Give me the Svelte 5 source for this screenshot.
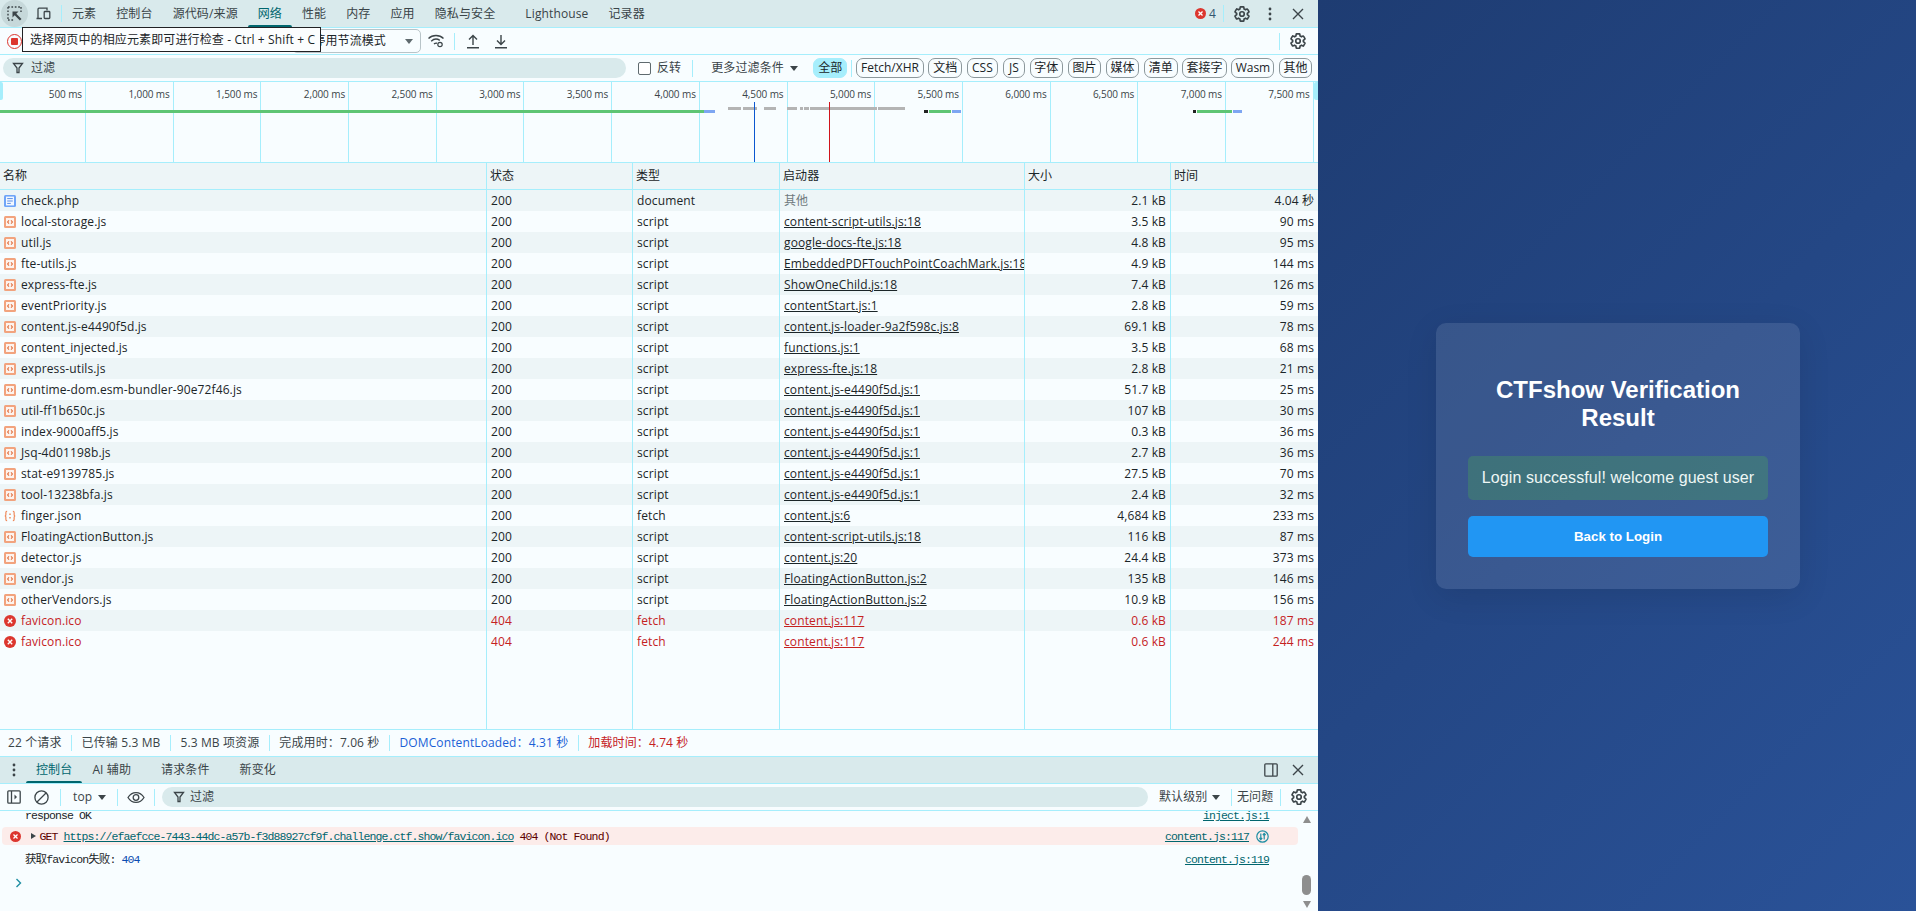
<script>
const tabs = [
  { t: '元素' }, { t: '控制台' }, { t: '源代码/来源' }, { t: '网络', active: true }, { t: '性能' },
  { t: '内存' }, { t: '应用' }, { t: '隐私与安全' }, { t: 'Lighthouse', gap: true }, { t: '记录器' }
];
const chips = [
  { t: 'Fetch/XHR', w: 67.5 }, { t: '文档', w: 33.5 }, { t: 'CSS', w: 31.5 }, { t: 'JS', w: 22 },
  { t: '字体', w: 33.5 }, { t: '图片', w: 33.5 }, { t: '媒体', w: 33.5 }, { t: '清单', w: 33.5 },
  { t: '套接字', w: 44.5 }, { t: 'Wasm', w: 43 }, { t: '其他', w: 33 }
];
const ticks = ['500 ms', '1,000 ms', '1,500 ms', '2,000 ms', '2,500 ms', '3,000 ms', '3,500 ms', '4,000 ms', '4,500 ms', '5,000 ms', '5,500 ms', '6,000 ms', '6,500 ms', '7,000 ms', '7,500 ms'];
const G = '#5fc574', B = '#7ea6f2', Y = '#b4b4b4', K = '#222222';
const bars = [
  { x: 0, w: 704, y: 28, c: G, h: 3 }, { x: 704, w: 11, y: 28, c: B, h: 3 },
  { x: 728, w: 13, y: 25, c: Y, h: 3 }, { x: 743, w: 14, y: 25, c: Y, h: 3 },
  { x: 764, w: 12, y: 25, c: Y, h: 3 }, { x: 787, w: 10, y: 25, c: Y, h: 3 },
  { x: 800, w: 3, y: 25, c: Y, h: 3 }, { x: 804, w: 5, y: 25, c: Y, h: 3 }, { x: 810, w: 67, y: 25, c: Y, h: 3 },
  { x: 878, w: 27, y: 25, c: Y, h: 3 },
  { x: 924, w: 4, y: 28, c: K, h: 3 }, { x: 929, w: 22, y: 28, c: G, h: 3 }, { x: 952, w: 9, y: 28, c: B, h: 3 },
  { x: 1193, w: 3, y: 28, c: K, h: 3 }, { x: 1197, w: 35, y: 28, c: G, h: 3 }, { x: 1233, w: 9, y: 28, c: B, h: 3 }
];
const rows = [
  ['doc', 'check.php', '200', 'document', '其他', '2.1 kB', '4.04 秒'],
  ['js', 'local-storage.js', '200', 'script', 'content-script-utils.js:18', '3.5 kB', '90 ms'],
  ['js', 'util.js', '200', 'script', 'google-docs-fte.js:18', '4.8 kB', '95 ms'],
  ['js', 'fte-utils.js', '200', 'script', 'EmbeddedPDFTouchPointCoachMark.js:18', '4.9 kB', '144 ms'],
  ['js', 'express-fte.js', '200', 'script', 'ShowOneChild.js:18', '7.4 kB', '126 ms'],
  ['js', 'eventPriority.js', '200', 'script', 'contentStart.js:1', '2.8 kB', '59 ms'],
  ['js', 'content.js-e4490f5d.js', '200', 'script', 'content.js-loader-9a2f598c.js:8', '69.1 kB', '78 ms'],
  ['js', 'content_injected.js', '200', 'script', 'functions.js:1', '3.5 kB', '68 ms'],
  ['js', 'express-utils.js', '200', 'script', 'express-fte.js:18', '2.8 kB', '21 ms'],
  ['js', 'runtime-dom.esm-bundler-90e72f46.js', '200', 'script', 'content.js-e4490f5d.js:1', '51.7 kB', '25 ms'],
  ['js', 'util-ff1b650c.js', '200', 'script', 'content.js-e4490f5d.js:1', '107 kB', '30 ms'],
  ['js', 'index-9000aff5.js', '200', 'script', 'content.js-e4490f5d.js:1', '0.3 kB', '36 ms'],
  ['js', 'Jsq-4d01198b.js', '200', 'script', 'content.js-e4490f5d.js:1', '2.7 kB', '36 ms'],
  ['js', 'stat-e9139785.js', '200', 'script', 'content.js-e4490f5d.js:1', '27.5 kB', '70 ms'],
  ['js', 'tool-13238bfa.js', '200', 'script', 'content.js-e4490f5d.js:1', '2.4 kB', '32 ms'],
  ['json', 'finger.json', '200', 'fetch', 'content.js:6', '4,684 kB', '233 ms'],
  ['js', 'FloatingActionButton.js', '200', 'script', 'content-script-utils.js:18', '116 kB', '87 ms'],
  ['js', 'detector.js', '200', 'script', 'content.js:20', '24.4 kB', '373 ms'],
  ['js', 'vendor.js', '200', 'script', 'FloatingActionButton.js:2', '135 kB', '146 ms'],
  ['js', 'otherVendors.js', '200', 'script', 'FloatingActionButton.js:2', '10.9 kB', '156 ms'],
  ['err', 'favicon.ico', '404', 'fetch', 'content.js:117', '0.6 kB', '187 ms'],
  ['err', 'favicon.ico', '404', 'fetch', 'content.js:117', '0.6 kB', '244 ms']
];
const GEAR = 'M19.14 12.94c.04-.3.06-.61.06-.94 0-.32-.02-.64-.07-.94l2.03-1.58c.18-.14.23-.41.12-.61l-1.92-3.32c-.12-.22-.37-.29-.59-.22l-2.39.96c-.5-.38-1.03-.7-1.62-.94l-.36-2.54c-.04-.24-.24-.41-.48-.41h-3.84c-.24 0-.43.17-.47.41l-.36 2.54c-.59.24-1.13.57-1.62.94l-2.39-.96c-.22-.08-.47 0-.59.22L2.74 8.87c-.12.21-.08.47.12.61l2.03 1.58c-.05.3-.09.63-.09.94s.02.64.07.94l-2.03 1.58c-.18.14-.23.41-.12.61l1.92 3.32c.12.22.37.29.59.22l2.39-.96c.5.38 1.03.7 1.62.94l.36 2.54c.05.24.24.41.48.41h3.84c.24 0 .44-.17.47-.41l.36-2.54c.59-.24 1.13-.56 1.62-.94l2.39.96c.22.08.47 0 .59-.22l1.92-3.32c.12-.22.07-.47-.12-.61l-2.01-1.58z';
</script>

{#snippet gear()}
  <svg class="ico" width="18" height="18" viewBox="0 0 24 24" fill="none" stroke="#3c4549" stroke-width="2.2"><path d={GEAR} /><circle cx="12" cy="12" r="3" /></svg>
{/snippet}
{#snippet close()}
  <svg class="ico" width="14" height="14" viewBox="0 0 14 14" fill="none" stroke="#3c4549" stroke-width="1.4"><path d="M2 2l10 10M12 2L2 12" /></svg>
{/snippet}
{#snippet kebab()}
  <svg class="ico" width="4" height="14" viewBox="0 0 4 14" fill="#3c4549"><circle cx="2" cy="2" r="1.4" /><circle cx="2" cy="7" r="1.4" /><circle cx="2" cy="12" r="1.4" /></svg>
{/snippet}
{#snippet funnel()}
  <svg class="ico" width="12" height="12" viewBox="0 0 12 12" fill="none" stroke="#3c4549" stroke-width="1.3"><path d="M1.5 1.5h9L7 6v4.5H5V6z" /></svg>
{/snippet}
{#snippet errdot(size)}
  <svg class="ico" width={size} height={size} viewBox="0 0 12 12"><circle cx="6" cy="6" r="6" fill="#dc362e" /><path d="M3.8 3.8l4.4 4.4M8.2 3.8l-4.4 4.4" stroke="#fff" stroke-width="1.4" /></svg>
{/snippet}
{#snippet rowIcon(kind)}
  {#if kind === 'doc'}
    <svg class="ico" width="12" height="12" viewBox="0 0 12 12"><rect width="12" height="12" rx="1.5" fill="#6fa5f8" /><rect x="2" y="1.6" width="8" height="8.8" fill="#f3f8ff" /><path d="M3.2 3.6h5.6M3.2 6h5.6M3.2 8.4h3.6" stroke="#5b8fe6" stroke-width="1" /></svg>
  {:else if kind === 'js'}
    <svg class="ico" width="12" height="12" viewBox="0 0 12 12"><rect width="12" height="12" rx="1.5" fill="#f2a37e" /><rect x="2" y="2" width="8" height="8" fill="#fdf3ee" /><path d="M5 4.4L3.6 6 5 7.6M7 4.4L8.4 6 7 7.6" fill="none" stroke="#e0703f" stroke-width="1.1" /></svg>
  {:else if kind === 'json'}
    <svg class="ico" width="12" height="12" viewBox="0 0 13 12" fill="none" stroke="#ee8a5c" stroke-width="1.3"><path d="M3.4 1H3Q2 1 2 2.4V4.6Q2 6 .8 6 2 6 2 7.4V9.6Q2 11 3 11h.4M9.6 1h.4q1 0 1 1.4v2.2Q11 6 12.2 6 11 6 11 7.4v2.2Q11 11 10 11h-.4" /><path d="M6.5 3.4v1.4M6.5 7v1.6" stroke-width="1.6" /></svg>
  {:else}
    {@render errdot(12)}
  {/if}
{/snippet}

<div class="page">
  <div class="devtools">
    <div class="bar tabs">
      <span class="inspect">
        <svg class="ico" width="16" height="16" viewBox="0 0 16 16" fill="none" stroke="#3c4549" stroke-width="1.4"><path d="M1 1h13M1 1v13M1 14h6M14 1v5" stroke-dasharray="1.7 1.7" /><path d="M5.5 5.5h6l-2.2 2.2 5.2 5.2-1.6 1.6-5.2-5.200-2.200 2.200z" fill="#3c4549" stroke="none" /></svg>
      </span>
      <span class="device">
        <svg class="ico" width="16" height="14" viewBox="0 0 16 14" fill="none" stroke="#3c4549" stroke-width="1.3"><path d="M7 11.5H1.5M3 11.5V2.2A1 1 0 0 1 4 1.2h8v2.2" /><rect x="9.2" y="4.5" width="5.6" height="7" rx=".8" /></svg>
      </span>
      <i class="sep tabsep"></i>
      {#each tabs as tab}
        <span class="tab" class:active={tab.active} class:wide={tab.gap}>{tab.t}</span>
      {/each}
      <span class="grow"></span>
      <span class="errcount">{@render errdot(11)}<b>4</b></span>
      <i class="sep"></i>
      <span class="iconbtn gearbtn">{@render gear()}</span>
      <span class="iconbtn kebabbtn">{@render kebab()}</span>
      <span class="iconbtn closebtn">{@render close()}</span>
    </div>

    <div class="bar toolbar">
      <span class="record"><i></i></span>
      <span class="grow-spacer"></span>
      <span class="select">停用节流模式<i class="caret"></i></span>
      <svg class="ico wifi" width="18" height="16" viewBox="0 0 18 16" fill="none" stroke="#3c4549" stroke-width="1.4"><path d="M1.5 5.5C5.5 1.5 12.5 1.5 16.5 5.5M4.2 8.2c2.5-2.3 6-2.6 8.6-.8M7 11c.9-.8 2-1 3-.8" /><circle cx="13" cy="11.5" r="2.2" stroke-width="1.2" /></svg>
      <i class="sep s2"></i>
      <svg class="ico up" width="14" height="15" viewBox="0 0 14 15" fill="none" stroke="#3c4549" stroke-width="1.4"><path d="M7 11V2M3 5.6L7 1.6l4 4M1 13.8h12" /></svg>
      <svg class="ico down" width="14" height="15" viewBox="0 0 14 15" fill="none" stroke="#3c4549" stroke-width="1.4"><path d="M7 1v9M3 6.4l4 4 4-4M1 13.8h12" /></svg>
      <span class="grow"></span>
      <i class="sep"></i>
      <span class="iconbtn gearbtn2">{@render gear()}</span>
    </div>

    <div class="bar filter">
      <div class="pill netpill"><span class="fun">{@render funnel()}</span><span>过滤</span></div>
      <span class="check"></span>
      <span class="inv">反转</span>
      <i class="sep s3"></i>
      <span class="more">更多过滤条件<i class="caret dark"></i></span>
      <span class="chip on">全部</span>
      <i class="sep s4"></i>
      {#each chips as c}<span class="chip" style="width:{c.w}px">{c.t}</span>{/each}
    </div>

    <div class="timeline">
      <div class="ticks">
        {#each ticks as t}<div class="tick">{t}</div>{/each}
      </div>
      <i class="handle left"></i>
      <i class="handle right"></i>
      {#each bars as b}
        <i class="wbar" style="left:{b.x}px;top:{b.y}px;width:{b.w}px;height:{b.h}px;background:{b.c}"></i>
      {/each}
      <i class="vline blue"></i>
      <i class="vline red"></i>
    </div>

    <div class="table">
      <div class="grid head">
        <div>名称</div><div>状态</div><div>类型</div><div>启动器</div><div>大小</div><div>时间</div>
      </div>
      {#each rows as r, i}
        <div class="grid row" class:alt={i % 2 === 0} class:bad={r[0] === 'err'}>
          <div class="namecell">{@render rowIcon(r[0])}<span>{r[1]}</span></div>
          <div>{r[2]}</div>
          <div>{r[3]}</div>
          <div class:other={r[4] === '其他'}><span class:lnk={r[4] !== '其他'}>{r[4]}</span></div>
          <div class="num">{r[5]}</div>
          <div class="num">{r[6]}</div>
        </div>
      {/each}
      <div class="grid filler"><div></div><div></div><div></div><div></div><div></div><div></div></div>
    </div>

    <div class="status">
      <span class="first">22 个请求</span>
      <span>已传输 5.3 MB</span>
      <span>5.3 MB 项资源</span>
      <span>完成用时：7.06 秒</span>
      <span class="dcl">DOMContentLoaded：4.31 秒</span>
      <span class="load">加载时间：4.74 秒</span>
    </div>

    <div class="bar drawer">
      <span class="iconbtn dkebab">{@render kebab()}</span>
      <span class="tab active">控制台</span>
      <span class="tab">AI 辅助</span>
      <span class="tab pad">请求条件</span>
      <span class="tab pad">新变化</span>
      <span class="grow"></span>
      <svg class="ico dock" width="14" height="14" viewBox="0 0 14 14" fill="none" stroke="#3c4549" stroke-width="1.3"><rect x=".8" y=".8" width="12.4" height="12.4" rx="1" /><path d="M8.8 1v12" /></svg>
      <span class="iconbtn closebtn">{@render close()}</span>
    </div>

    <div class="bar ctool">
      <svg class="ico sb" width="14" height="14" viewBox="0 0 14 14" fill="none" stroke="#3c4549" stroke-width="1.3"><rect x=".8" y=".8" width="12.4" height="12.4" rx="1" /><path d="M4.5 1v12" /><path d="M7.5 4.6L10 7 7.5 9.4z" fill="#3c4549" stroke="none" /></svg>
      <svg class="ico clear" width="15" height="15" viewBox="0 0 15 15" fill="none" stroke="#3c4549" stroke-width="1.3"><circle cx="7.5" cy="7.5" r="6.6" /><path d="M3 12L12 3" /></svg>
      <i class="sep s5"></i>
      <span class="topsel">top<i class="caret dark"></i></span>
      <i class="sep s6"></i>
      <svg class="ico eye" width="18" height="13" viewBox="0 0 18 13" fill="none" stroke="#3c4549" stroke-width="1.3"><path d="M1 6.5c4-6.6 12-6.6 16 0-4 6.6-12 6.6-16 0z" /><circle cx="9" cy="6.5" r="2.8" /></svg>
      <i class="sep s7"></i>
      <div class="pill conpill"><span class="fun2">{@render funnel()}</span><span>过滤</span></div>
      <span class="level">默认级别<i class="caret dark"></i></span>
      <i class="sep s8"></i>
      <span class="noissue">无问题</span>
      <i class="sep"></i>
      <span class="iconbtn gearbtn3">{@render gear()}</span>
    </div>

    <div class="console">
      <div class="msgs">
        <div class="line first-line"><span class="body">response OK</span><span class="src">inject.js:1</span></div>
        <div class="line errline">
          <span class="erri">{@render errdot(11)}</span>
          <i class="tri"></i>
          <span class="etext">GET <span class="url">https://efaefcce-7443-44dc-a57b-f3d88927cf9f.challenge.ctf.show/favicon.ico</span> 404 (Not Found)</span>
          <span class="src">content.js:117</span>
          <svg class="ico net" width="13" height="13" viewBox="0 0 13 13" fill="none" stroke="#1f8ea3" stroke-width="1.2"><circle cx="6.5" cy="6.5" r="5.7" /><path d="M4.8 3.5v6M3.4 8l1.4 1.5L6.2 8M8.2 9.5v-6M6.8 5l1.4-1.5L9.6 5" /></svg>
        </div>
        <div class="line third"><span class="body">获取favicon失败: <span class="blue">404</span></span><span class="src">content.js:119</span></div>
        <div class="prompt">
          <svg class="ico" width="7" height="10" viewBox="0 0 7 10" fill="none" stroke="#1f8ea3" stroke-width="1.4"><path d="M1.5 1l4 4-4 4" /></svg>
        </div>
      </div>
      <div class="scroll">
        <i class="sarrow up2"></i>
        <span class="grow"></span>
        <i class="thumb"></i>
        <i class="sarrow down2"></i>
      </div>
    </div>

    <div class="tooltip">选择网页中的相应元素即可进行检查 - Ctrl + Shift + C</div>
  </div>

  <main class="result">
    <section class="card">
      <h2>CTFshow Verification Result</h2>
      <div class="message">Login successful! welcome guest user</div>
      <button class="back">Back to Login</button>
    </section>
  </main>
</div>

<style>
  :global(body) { margin: 0; overflow: hidden; }
  .page { display: flex; width: 1916px; height: 911px; }
  .devtools {
    position: relative; width: 1318px; flex: none; display: flex; flex-direction: column;
    background: #f8fdff; color: #1b2528; font: 12px/16px "Open Sans", "Noto Sans CJK SC", sans-serif;
    letter-spacing: 0.12px; white-space: nowrap; overflow: hidden;
  }
  i { display: block; font-style: normal; }
  .ico { display: block; flex: none; }
  .grow { flex: 1; }
  .sep { width: 1px; height: 17px; background: #a6eefc; flex: none; }
  .bar { display: flex; align-items: center; flex: none; border-bottom: 1px solid #a6eefc; box-sizing: border-box; }

  .tabs { height: 28px; background: #d9eaec; }
  .inspect { width: 27px; height: 27px; margin-left: 1px; border-radius: 50%; background: #c6d8da; display: flex; align-items: center; justify-content: center; flex: none; }
  .device { margin-left: 7px; flex: none; }
  .tabsep { margin-left: 10px; }
  .tab { padding: 0 10px; height: 100%; display: flex; align-items: center; white-space: nowrap; color: #3a4448; position: relative; box-sizing: border-box; }
  .tab.active { color: #00666e; }
  .tab.active::after { content: ""; position: absolute; left: 0; right: 0; bottom: 0; height: 2px; background: #00666e; border-radius: 2px 2px 0 0; }
  .tab.wide { margin-left: 10px; }
  .errcount { display: flex; align-items: center; gap: 3px; margin-right: 7px; }
  .errcount b { font-weight: 400; color: #34566e; }
  .iconbtn { display: flex; align-items: center; justify-content: center; flex: none; }
  .gearbtn { margin-left: 9px; }
  .kebabbtn { margin-left: 17px; }
  .closebtn { margin: 0 13px 0 19px; }

  .toolbar { height: 27px; }
  .record { width: 15px; height: 15px; margin-left: 7px; box-sizing: border-box; border: 1.5px solid #dc362e; border-radius: 50%; display: flex; align-items: center; justify-content: center; flex: none; }
  .record i { width: 7px; height: 7px; background: #dc362e; border-radius: 1px; }
  .grow-spacer { width: 270px; flex: none; }
  .select { width: 129px; height: 24px; box-sizing: border-box; border: 1px solid #b8c4c8; border-radius: 5px; display: flex; align-items: center; justify-content: flex-end; padding-right: 34px; position: relative; color: #1b2528; flex: none; }
  .caret { position: absolute; right: 7px; top: 9px; width: 0; height: 0; border-left: 4px solid transparent; border-right: 4px solid transparent; border-top: 5px solid #5f6a6e; }
  .caret.dark { border-top-color: #3c4549; }
  .wifi { margin-left: 6px; }
  .s2 { margin-left: 9px; }
  .up { margin-left: 11px; }
  .down { margin-left: 14px; }
  .gearbtn2 { margin: 0 11px 0 9px; }

  .filter { height: 27px; padding-left: 3px; }
  .pill { background: #d9eaec; border-radius: 10px; height: 20px; display: flex; align-items: center; box-sizing: border-box; color: #3a4448; flex: none; }
  .netpill { width: 623px; }
  .fun { margin: 0 7px 0 9px; }
  .check { width: 11px; height: 11px; border: 1px solid #5f6a6e; border-radius: 2px; margin-left: 12px; flex: none; background: #fff; }
  .inv { margin-left: 6px; color: #3a4448; }
  .s3 { margin-left: 11px; }
  .more { margin-left: 18px; width: 97px; position: relative; color: #3a4448; flex: none; }
  .more .caret { right: 10px; top: 6px; }
  .chip { height: 20px; box-sizing: border-box; border: 1px solid #8c989c; border-radius: 7px; display: flex; align-items: center; justify-content: center; margin-right: 4.7px; flex: none; color: #1b2528; letter-spacing: 0; }
  .chip.on { background: #a6eefc; border-color: #a6eefc; margin-right: 4px; margin-left: 5px; width: 34px; }
  .s4 { margin-right: 4px; }

  .timeline { position: relative; height: 81px; flex: none; border-bottom: 1px solid #a6eefc; box-sizing: border-box; }
  .ticks { display: flex; height: 100%; margin-left: -1.7px; }
  .tick { width: 87.7px; box-sizing: border-box; flex: none; border-right: 1px solid #a6eefc; text-align: right; padding: 4px 3px 0 0; white-space: nowrap; color: #3a4448; font-size: 10px; letter-spacing: -0.1px; }
  .handle { position: absolute; top: 0; width: 3px; height: 18px; background: #a6eefc; }
  .handle.left { left: 0; border-radius: 0 2px 2px 0; }
  .handle.right { right: 0; width: 4px; border-radius: 2px 0 0 2px; }
  .wbar { position: absolute; }
  .vline { position: absolute; top: 20px; bottom: 0; width: 1px; }
  .vline.blue { left: 754px; background: #0b57d0; }
  .vline.red { left: 829px; background: #d0141c; }

  .table { flex: 1; display: flex; flex-direction: column; min-height: 0; }
  .grid { display: grid; grid-template-columns: 487px 146px 147px 245px 146px 147px; flex: none; }
  .grid > div { border-right: 1px solid #a6eefc; padding: 0 4px; box-sizing: border-box; white-space: nowrap; overflow: hidden; display: flex; align-items: center; min-width: 0; }
  .grid > div:last-child { border-right: 0; }
  .head { height: 27px; background: #edf5f7; border-bottom: 1px solid #a6eefc; box-sizing: border-box; }
  .head > div { padding-left: 3px; }
  .row { height: 21px; }
  .row.alt { background: #edf5f7; }
  .row.bad { color: #c5221f; }
  .namecell { gap: 5px; }
  .num { justify-content: flex-end; }
  .other { color: #6f7a7e; }
  .lnk { text-decoration: underline; }
  .filler { flex: 1; }

  .status { height: 28px; flex: none; box-sizing: border-box; border-top: 1px solid #a6eefc; border-bottom: 1px solid #a6eefc; display: flex; align-items: center; padding-left: 8px; color: #3a4448; }
  .status span { padding: 0 9.5px; border-right: 1px solid #a6eefc; white-space: nowrap; line-height: 16px; }
  .status .first { padding-left: 0; }
  .status span:last-child { border-right: 0; }
  .status .dcl { color: #1a5fd6; }
  .status .load { color: #c5221f; }

  .drawer { height: 27px; background: #d9eaec; }
  .dkebab { width: 28px; }
  .drawer .tab.active { margin-left: -2px; padding: 0 10px; }
  .drawer .tab.pad { margin-left: 10px; }
  .drawer .closebtn { margin-left: 13px; }

  .ctool { height: 27px; }
  .sb { margin-left: 7px; }
  .clear { margin-left: 13px; }
  .s5 { margin-left: 11px; }
  .topsel { margin-left: 12px; width: 44px; position: relative; color: #3a4448; flex: none; }
  .topsel .caret { right: 11px; top: 6px; }
  .eye { margin-left: 9px; }
  .s7 { margin-left: 9px; }
  .conpill { width: 986px; margin-left: 7px; }
  .fun2 { margin: 0 5px 0 11px; }
  .level { margin-left: 11px; width: 72px; position: relative; color: #3a4448; flex: none; }
  .level .caret { right: 11px; top: 6px; }
  .noissue { margin: 0 7px 0 5px; color: #3a4448; }
  .gearbtn3 { margin: 0 11px 0 9px; }

  .console { height: 100px; flex: none; display: flex; overflow: hidden; font: 11.5px/13px "Liberation Mono", "Noto Sans CJK SC", monospace; letter-spacing: -0.9px; color: #1b2528; }
  .msgs { flex: 1; min-width: 0; display: flex; flex-direction: column; padding: 0 0 0 2px; }
  .line { display: flex; align-items: center; height: 22px; padding-right: 29px; flex: none; }
  .first-line { height: 16px; align-items: flex-start; line-height: 10px; }
  .line .body { padding-left: 23px; }
  .src { margin-left: auto; color: #00666e; text-decoration: underline; }
  .errline { height: 18px; background: #fcecea; border-radius: 4px; padding-right: 0; color: #5c0000; }
  .erri { margin-left: 8px; }
  .tri { width: 0; height: 0; margin-left: 9.5px; border-top: 3.5px solid transparent; border-bottom: 3.5px solid transparent; border-left: 5px solid #3c4549; }
  .etext { margin-left: 4px; white-space: nowrap; }
  .url { color: #00666e; text-decoration: underline; }
  .errline .src { margin-right: 7px; }
  .net { margin-right: 29px; }
  .blue { color: #0b4bb0; }
  .third { height: 28px; }
  .prompt { padding: 5px 0 0 13px; }
  .scroll { width: 20px; flex: none; display: flex; flex-direction: column; align-items: center; padding: 5px 3px 3px 0; box-sizing: border-box; }
  .thumb { width: 9px; height: 20px; background: #8e8e8e; border-radius: 5px; margin-bottom: 6px; }
  .sarrow { width: 0; height: 0; border-left: 4.5px solid transparent; border-right: 4.5px solid transparent; }
  .up2 { border-bottom: 7px solid #8e8e8e; }
  .down2 { border-top: 7px solid #8e8e8e; }

  .tooltip { position: absolute; left: 22px; top: 27px; width: 299px; height: 25px; box-sizing: border-box; background: #fbfdfe; border: 1px solid #202124; padding-left: 7px; display: flex; align-items: center; color: #1b2528; white-space: nowrap; }

  .result { flex: 1; box-sizing: border-box; padding: 1px 0 0 2px; display: flex; align-items: center; justify-content: center; background: linear-gradient(135deg, #1e3c72, #2a5298); font-family: "Liberation Sans", Arial, sans-serif; }
  .card { width: 364px; box-sizing: border-box; padding: 32px; background: rgba(255, 255, 255, 0.1); border-radius: 10px; box-shadow: 0 8px 32px rgba(0, 0, 0, 0.1); color: #fff; text-align: center; }
  h2 { margin: 21px 0 24px; font-size: 24px; line-height: 28px; font-weight: 700; }
  .message { background: rgba(76, 175, 80, 0.3); border-radius: 5px; padding: 13px 0; line-height: 18px; font-size: 16px; letter-spacing: 0.08px; margin-bottom: 16px; color: #eef7f5; }
  .back { display: block; width: 100%; height: 41px; border: 0; border-radius: 5px; background: #2196f3; color: #fff; font: 700 13.33px "Liberation Sans", Arial, sans-serif; }
</style>
